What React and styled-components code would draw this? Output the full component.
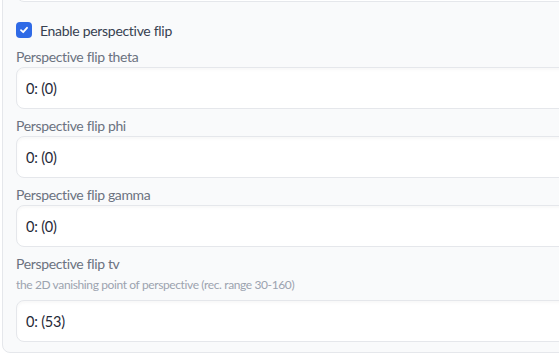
import React from 'react';
import styled, { createGlobalStyle } from 'styled-components';

const GlobalStyle = createGlobalStyle`
    body {
        margin: 0;
        background: #ffffff;
        overflow: hidden;
        font-family: Lato, "Liberation Sans", sans-serif;
    }
`;

const Panel = styled.div`
    display: flex;
    flex-direction: column;
    width: 640px;
    margin: -41px 0 0 2px;
    padding: 0 13px 10px 13px;
    background: #f9fafb;
    border: 1px solid #e5e7eb;
    border-radius: 8px;
    box-sizing: border-box;
`;

const Input = styled.div`
    height: 42px;
    box-sizing: border-box;
    display: flex;
    align-items: center;
    padding: 0 9px;
    background: #ffffff;
    border: 1px solid #e5e7eb;
    border-radius: 8px;
    box-shadow: inset 0 2px 3px rgba(0, 0, 0, 0.03);
    color: #1f2937;
    font-size: 14.5px;
    letter-spacing: -0.2px;
`;

const CheckRow = styled.label`
    display: flex;
    align-items: center;
    gap: 8px;
    height: 20px;
    margin: 18px 0 7px;
    color: #374151;
    font-size: 14px;
    letter-spacing: -0.3px;
`;

const Box = styled.span`
    width: 16px;
    height: 16px;
    border-radius: 4px;
    background: #2f6ae6;
    display: flex;
    align-items: center;
    justify-content: center;
`;

const Field = styled.div`
    display: flex;
    flex-direction: column;
    & + & {
        margin-top: 7px;
    }
`;

const Label = styled.span`
    height: 20px;
    line-height: 20px;
    font-size: 14px;
    letter-spacing: -0.35px;
    color: #6b7280;
`;

const Info = styled.span`
    height: 18px;
    line-height: 18px;
    font-size: 12px;
    letter-spacing: -0.38px;
    color: #9ca3af;
    margin: 2px 0 6px;
`;

const fields = [
    { label: 'Perspective flip theta', value: '0: (0)' },
    { label: 'Perspective flip phi', value: '0: (0)' },
    { label: 'Perspective flip gamma', value: '0: (0)' },
    {
        label: 'Perspective flip tv',
        info: 'the 2D vanishing point of perspective (rec. range 30-160)',
        value: '0: (53)',
    },
];

const App = () => (
    <>
        <GlobalStyle />
        <Panel>
            <Input />
            <CheckRow>
                <Box>
                    <svg width="10" height="10" viewBox="0 0 10 10">
                        <path d="M2 5.2 L4.2 7.2 L8 2.8" fill="none" stroke="#fff" strokeWidth="1.8" strokeLinecap="round" strokeLinejoin="round" />
                    </svg>
                </Box>
                Enable perspective flip
            </CheckRow>
            {fields.map(f => (
                <Field key={f.label}>
                    <Label>{f.label}</Label>
                    {f.info && <Info>{f.info}</Info>}
                    <Input>{f.value}</Input>
                </Field>
            ))}
        </Panel>
    </>
);

export default App;
